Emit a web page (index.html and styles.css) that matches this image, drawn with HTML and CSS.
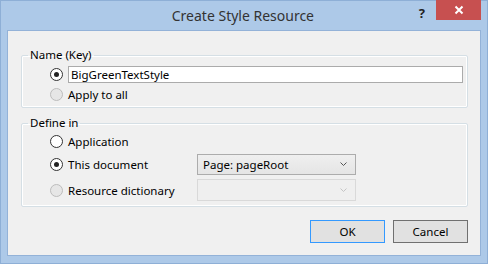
FILE: index.html
```html
<!DOCTYPE html>
<html lang="en">
<head>
    <meta charset="UTF-8">
    <title>Create Style Resource</title>
    <link rel="stylesheet" href="styles.css">
</head>
<body>
    <div class="window">
        <div class="titlebar">
            <span class="title">Create Style Resource</span>
            <span class="help">?</span>
            <span class="close">
                <svg width="10" height="10" viewBox="0 0 10 10">
                    <path d="M1.5 1.5 L8.5 8.5 M8.5 1.5 L1.5 8.5" stroke="#fff" stroke-width="2"/>
                </svg>
            </span>
        </div>

        <div class="client">
            <fieldset class="group group-name">
                <legend>Name (Key)</legend>
                <div class="row row-key">
                    <span class="radio checked"></span>
                    <input class="textbox" type="text" value="BigGreenTextStyle">
                </div>
                <div class="row row-apply">
                    <span class="radio disabled"></span>
                    <span class="label">Apply to all</span>
                </div>
            </fieldset>

            <fieldset class="group group-define">
                <legend>Define in</legend>
                <div class="define-grid">
                    <span class="radio"></span>
                    <span class="label">Application</span>
                    <span></span>

                    <span class="radio checked"></span>
                    <span class="label">This document</span>
                    <div class="combo">
                        <span>Page: pageRoot</span>
                        <svg class="chevron" width="7" height="4" viewBox="0 0 7 4">
                            <path d="M0.5 0.5 L3.5 3.5 L6.5 0.5" stroke="#555" fill="none"/>
                        </svg>
                    </div>

                    <span class="radio disabled"></span>
                    <span class="label">Resource dictionary</span>
                    <div class="combo combo-disabled">
                        <span></span>
                        <svg class="chevron" width="7" height="4" viewBox="0 0 7 4">
                            <path d="M0.5 0.5 L3.5 3.5 L6.5 0.5" stroke="#c4c4c4" fill="none"/>
                        </svg>
                    </div>
                </div>
            </fieldset>

            <div class="buttons">
                <button class="btn btn-default">OK</button>
                <button class="btn">Cancel</button>
            </div>
        </div>
    </div>
</body>
</html>
```

FILE: styles.css
```css
body {
    margin: 0;
    font-family: "Noto Sans", "Open Sans", sans-serif;
    font-size: 11.5px;
    color: #000;
}

.window {
    width: 488px;
    height: 264px;
    box-sizing: border-box;
    background-color: #adc9e8;
    border: 1px solid #8eafd6;
    display: flex;
    flex-direction: column;
}

.titlebar {
    height: 29px;
    display: flex;
    align-items: flex-start;
}

.title {
    flex: 1;
    text-align: center;
    font-size: 14px;
    color: #333;
    padding-top: 5px;
    padding-left: 66px;
}

.help {
    font-weight: bold;
    font-size: 13px;
    color: #222;
    margin-top: 3px;
    margin-right: 11px;
}

.close {
    width: 45px;
    height: 20px;
    margin-top: -1px;
    margin-right: 6px;
    background-color: #c75050;
    display: flex;
    align-items: center;
    justify-content: center;
}

.client {
    flex: 1;
    margin: 0 6px 7px 6px;
    background-color: #f0f0f0;
    border: 1px solid #93b2d8;
    padding: 16px 12px 0 13px;
}

.group {
    margin: 0;
    padding: 0 0 3px 0;
    border: 1px solid #d5dfe5;
    border-radius: 2px;
    box-shadow: inset 0 0 0 1px #fff;
}

.group legend {
    margin-left: 6px;
    padding: 0 2px;
    line-height: 16px;
}

.group-define {
    margin-top: 7px;
}

.row {
    display: flex;
    align-items: center;
    padding-left: 28px;
}

.row-key {
    height: 21px;
    margin-top: 1px;
}

.row-apply {
    height: 19px;
}

.radio {
    width: 11px;
    height: 11px;
    border: 1px solid #333;
    border-radius: 50%;
    background-color: #fff;
    margin-right: 5px;
    display: flex;
    align-items: center;
    justify-content: center;
    flex-shrink: 0;
}

.radio.checked::after {
    content: "";
    width: 5px;
    height: 5px;
    border-radius: 50%;
    background-color: #222;
}

.radio.disabled {
    border-color: #bcbcbc;
    background-color: #e6e6e6;
}

.textbox {
    flex: 1;
    height: 17px;
    box-sizing: border-box;
    margin-right: 4px;
    border: 1px solid #ababab;
    background-color: #fff;
    font-family: inherit;
    font-size: 11.5px;
    padding: 0 2px;
    outline: none;
}

.define-grid {
    display: grid;
    grid-template-columns: 18px 129px 159px;
    grid-template-rows: 20px 26px 26px;
    align-items: center;
    padding-left: 28px;
}

.combo {
    height: 21px;
    box-sizing: border-box;
    border: 1px solid #acacac;
    background: linear-gradient(#efefef, #e5e5e5);
    display: flex;
    align-items: center;
    justify-content: space-between;
    padding: 0 8px 0 5px;
}

.combo-disabled {
    height: 22px;
    border-color: #d9d9d9;
    background: #efefef;
}

.buttons {
    display: flex;
    justify-content: flex-end;
    gap: 8px;
    margin-top: 13px;
}

.btn {
    width: 75px;
    height: 23px;
    border: 1px solid #707070;
    background-color: #e1e1e1;
    font-family: inherit;
    font-size: 11.5px;
    color: #000;
    padding: 0;
}

.btn-default {
    border-color: #3399ff;
}
```
